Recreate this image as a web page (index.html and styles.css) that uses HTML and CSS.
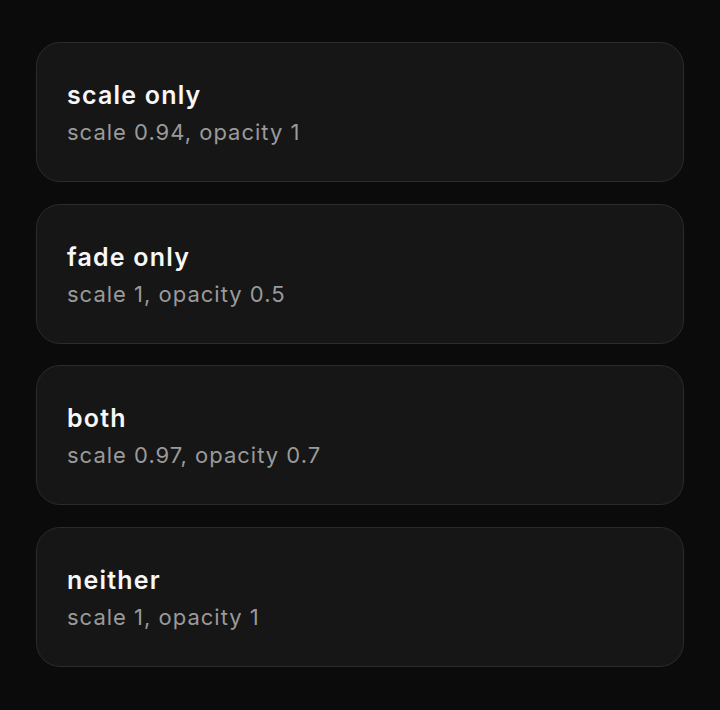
FILE: index.html
```html
<!DOCTYPE html>
<html lang="en">
<head>
    <meta charset="UTF-8">
    <meta name="viewport" content="width=device-width, initial-scale=1.0">
    <title>Press feedback</title>
    <link rel="stylesheet" href="styles.css">
</head>
<body>
    <div class="list">
        <div class="card">
            <h3>scale only</h3>
            <p>scale 0.94, opacity 1</p>
        </div>
        <div class="card">
            <h3>fade only</h3>
            <p>scale 1, opacity 0.5</p>
        </div>
        <div class="card">
            <h3>both</h3>
            <p>scale 0.97, opacity 0.7</p>
        </div>
        <div class="card">
            <h3>neither</h3>
            <p>scale 1, opacity 1</p>
        </div>
    </div>
</body>
</html>
```

FILE: styles.css
```css
body {
    font-family: 'Inter', 'Noto Sans', sans-serif;
    margin: 0;
    padding: 0;
    background-color: #0b0b0b;
    color: #f5f5f5;
}
.list {
    display: flex;
    flex-direction: column;
    gap: 21.5px;
    padding: 42px 36px;
}
.card {
    background: #161616;
    border: 1px solid #2b2b2b;
    border-radius: 24px;
    padding: 34px 30px 33px;
}
.card h3 {
    margin: 0;
    font-size: 25px;
    line-height: 36px;
    font-weight: 600;
    letter-spacing: 1.2px;
    color: #f7f7f7;
}
.card p {
    margin: 3px 0 0;
    font-size: 22px;
    line-height: 32px;
    letter-spacing: 1px;
    color: #9a9a9a;
}
```
